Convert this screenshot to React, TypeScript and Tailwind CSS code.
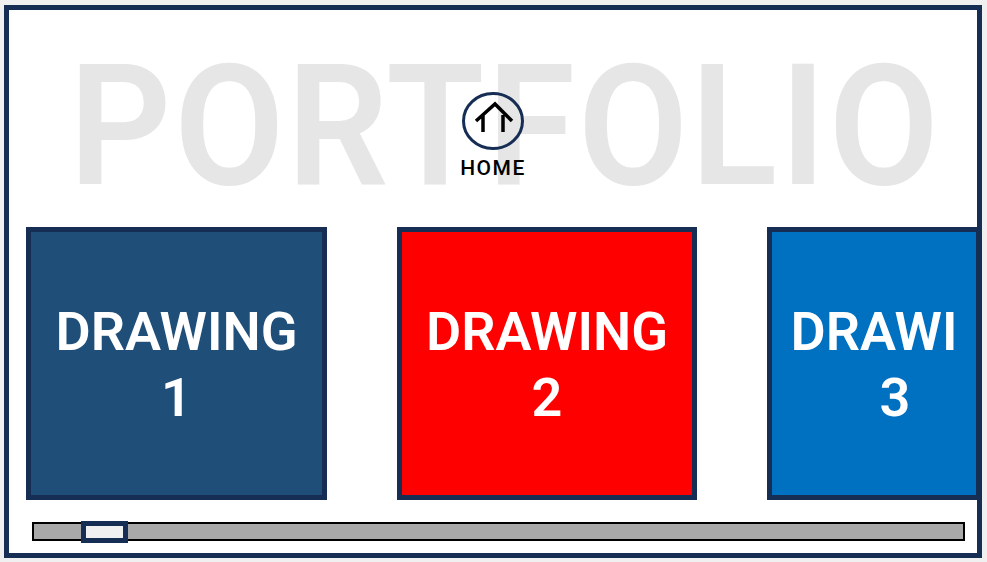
export default function App() {
  const face = "font-['Roboto',sans-serif]";
  return (
    <div className={`h-[562px] w-[987px] overflow-hidden bg-[#f0f0f0] pl-[4px] pt-[5px] ${face}`}>
      <div className="flex h-[553px] w-[978px] flex-col overflow-hidden border-[5px] border-[#162d54] bg-white">
        <header className="relative flex h-[217px] shrink-0 justify-center pl-[25px]">
          <h1 className="mt-[22px] h-[190px] scale-x-[0.95] text-[168px] leading-[190px] font-semibold tracking-[3px] whitespace-nowrap text-[#e6e6e6]">PORTFOLIO</h1>
          <a className="absolute left-[448px] top-[82px] flex w-[72px] flex-col items-center">
            <svg width="62" height="58" viewBox="0 0 62 58" fill="none">
              <ellipse cx="31" cy="29" rx="29.5" ry="27.5" stroke="#162d54" strokeWidth="3" />
              <path d="M14 29 L33 12 L50 29 M21 23 V40 M41 23 V40" stroke="#000" strokeWidth="3.5" />
            </svg>
            <span className="mt-[6px] text-[21px] leading-[24px] font-medium tracking-[1.5px] text-black">HOME</span>
          </a>
        </header>
        <section className="flex h-[273px] shrink-0 gap-[70px] pl-[17px]">
          <article className="flex h-full w-[301px] shrink-0 flex-col items-center border-[5px] border-[#162d54] bg-[#1f4e79] pt-[67px] text-[54px] leading-[66px] font-semibold text-white">
            <span>DRAWING</span>
            <span>1</span>
          </article>
          <article className="flex h-full w-[300px] shrink-0 flex-col items-center border-[5px] border-[#162d54] bg-[#ff0000] pt-[67px] text-[54px] leading-[66px] font-semibold text-white">
            <span>DRAWING</span>
            <span>2</span>
          </article>
          <article className="flex h-full w-[214px] shrink-0 flex-col items-center border-[5px] border-[#162d54] bg-[#0070c0] pt-[67px] text-[54px] leading-[66px] font-semibold text-white">
            <span>DRAWI</span>
            <span className="ml-[42px]">3</span>
          </article>
        </section>
        <div className="relative mt-[22px] ml-[23px] h-[19px] w-[933px] shrink-0 border-2 border-black bg-[#a9a9a9]">
          <div className="absolute left-[47px] top-[-3px] h-[22px] w-[47px] border-[5px] border-[#162d54] bg-[#f0f0f0]" />
        </div>
      </div>
    </div>
  );
}
